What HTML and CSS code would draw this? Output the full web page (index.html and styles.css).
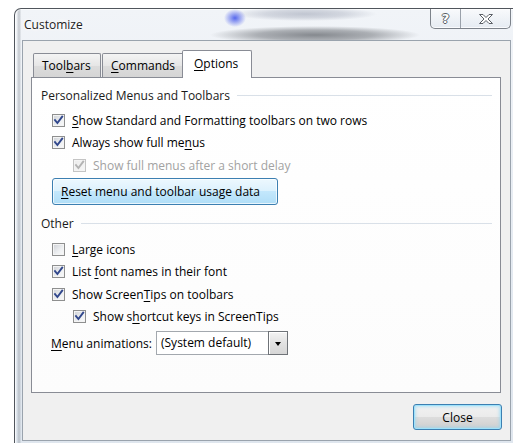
FILE: index.html
```html
<!DOCTYPE html>
<html lang="en">
<head>
<meta charset="utf-8">
<title>Customize</title>
<link rel="stylesheet" href="styles.css">
</head>
<body>
<div class="window">
  <div class="titlebar">
    <span class="title">Customize</span>
    <div class="caption-buttons">
      <span class="cap-btn cap-help">?</span>
      <span class="cap-btn cap-close">
        <svg width="16" height="12" viewBox="0 0 16 12"><path d="M1.5 1.5h3.5l3 3 3-3h3.5l-4.5 4.5 4.5 4.5h-3.5l-3-3-3 3h-3.5l4.5-4.5z" fill="#fff" stroke="#5a5f66" stroke-width="1" stroke-linejoin="round"/></svg>
      </span>
    </div>
  </div>
  <div class="frame-body">
    <div class="client">
      <div class="tabs">
        <div class="tab tab-toolbars">Tool<u>b</u>ars</div>
        <div class="tab tab-commands"><u>C</u>ommands</div>
        <div class="tab tab-options active"><u>O</u>ptions</div>
      </div>
      <div class="panel">
        <div class="group-head"><span>Personalized Menus and Toolbars</span><i class="rule"></i></div>
        <div class="check checked"><span class="box"><svg viewBox="0 0 11 11"><path d="M2 5.2l2.4 2.8 4.8-6.3"/></svg></span><span><u>S</u>how Standard and Formatting toolbars on two rows</span></div>
        <div class="check checked"><span class="box"><svg viewBox="0 0 11 11"><path d="M2 5.2l2.4 2.8 4.8-6.3"/></svg></span><span>Always show full me<u>n</u>us</span></div>
        <div class="check checked disabled indent"><span class="box"><svg viewBox="0 0 11 11"><path d="M2 5.2l2.4 2.8 4.8-6.3"/></svg></span><span>Show full menus after a short delay</span></div>
        <button class="btn-reset"><u>R</u>eset menu and toolbar usage data</button>
        <div class="group-head other"><span>Other</span><i class="rule"></i></div>
        <div class="check"><span class="box"></span><span><u>L</u>arge icons</span></div>
        <div class="check checked"><span class="box"><svg viewBox="0 0 11 11"><path d="M2 5.2l2.4 2.8 4.8-6.3"/></svg></span><span>List <u>f</u>ont names in their font</span></div>
        <div class="check checked"><span class="box"><svg viewBox="0 0 11 11"><path d="M2 5.2l2.4 2.8 4.8-6.3"/></svg></span><span>Show Screen<u>T</u>ips on toolbars</span></div>
        <div class="check checked indent"><span class="box"><svg viewBox="0 0 11 11"><path d="M2 5.2l2.4 2.8 4.8-6.3"/></svg></span><span>Show s<u>h</u>ortcut keys in ScreenTips</span></div>
        <div class="combo-row">
          <span class="combo-label"><u>M</u>enu animations:</span>
          <div class="combo">
            <span class="combo-value">(System default)</span>
            <span class="combo-arrow"><i class="tri"></i></span>
          </div>
        </div>
      </div>
      <div class="footer">
        <button class="btn-close">Close</button>
      </div>
    </div>
  </div>
</div>
</body>
</html>
```

FILE: styles.css
```css
* {
  box-sizing: border-box;
}

html,
body {
  margin: 0;
  padding: 0;
}

body {
  width: 513px;
  height: 443px;
  overflow: hidden;
  background: #fff;
  font-family: "Open Sans", "Noto Sans", sans-serif;
  font-size: 12px;
  color: #000;
}

u {
  text-decoration: underline;
  text-underline-offset: 2px;
}

/* Aero glass window frame */
.window {
  margin: 8px 0 0 14px;
  width: 505px;
  border: 1px solid #50555c;
  border-bottom: none;
  border-radius: 7px 7px 0 0;
  box-shadow: inset 0 0 0 1px rgba(255, 255, 255, 0.7);
  background:
    linear-gradient(to right, transparent 2px, rgba(110, 118, 128, 0.28) 3px, rgba(110, 118, 128, 0.28) 5px, transparent 6px),
    linear-gradient(to bottom, #f1f4f8, #e4eaf1 60%, #dfe6ee);
}

/* title bar, with the blurred desktop showing through the glass */
.titlebar {
  height: 31px;
  display: flex;
  align-items: center;
  padding-left: 9px;
  background:
    radial-gradient(ellipse 11px 9px at 220px 9px, rgba(60, 80, 235, 0.85), rgba(60, 80, 235, 0) 100%),
    radial-gradient(ellipse 72px 7px at 290px 5px, rgba(120, 128, 150, 0.4) 0%, rgba(120, 128, 150, 0.25) 55%, rgba(120, 128, 150, 0) 100%),
    radial-gradient(ellipse 105px 9px at 300px 26px, rgba(88, 92, 98, 0.7) 0%, rgba(88, 92, 98, 0.45) 55%, rgba(88, 92, 98, 0) 100%);
}

.title {
  font-size: 12px;
  color: #222;
  text-shadow: 0 0 6px #fff, 0 0 10px #fff, 0 0 3px #fff;
}

.caption-buttons {
  margin-left: auto;
  margin-right: 7px;
  align-self: flex-start;
  display: flex;
  height: 20px;
  border: 1px solid #7d838b;
  border-top: none;
  border-radius: 0 0 5px 5px;
  background: linear-gradient(to bottom, rgba(255, 255, 255, 0.55), rgba(225, 232, 240, 0.7));
  box-shadow: inset 0 -1px 0 rgba(255, 255, 255, 0.8);
}

.cap-btn {
  display: flex;
  align-items: center;
  justify-content: center;
  height: 100%;
}

.cap-help {
  width: 30px;
  border-right: 1px solid #9aa1aa;
  font-family: "DejaVu Sans", sans-serif;
  font-weight: bold;
  font-size: 13px;
  color: #fff;
  text-shadow: 1px 0 0 #5a5f66, -1px 0 0 #5a5f66, 0 1px 0 #5a5f66, 0 -1px 0 #5a5f66;
}

.cap-close {
  width: 49px;
}

.cap-close svg {
  display: block;
}

/* dialog client area */
.frame-body {
  padding: 0 7px 7px 7px;
}

.client {
  height: 401px;
  background: #f0f0f0;
  border: 1px solid #9aa3ad;
  padding: 9px 9px 0 8px;
}

/* tab strip */
.tabs {
  display: flex;
  align-items: flex-end;
  height: 27px;
  margin-left: 2px;
}

.tab {
  height: 24px;
  border: 1px solid #898c95;
  border-bottom: none;
  border-radius: 2px 2px 0 0;
  background: linear-gradient(to bottom, #f4f4f4, #e6e6e6 50%, #dcdcdc 51%, #d5d5d5);
  padding-left: 8px;
  line-height: 23px;
  color: #000;
}

.tab-toolbars {
  width: 68px;
}

.tab-commands {
  width: 82px;
  margin-left: 1px;
}

.tab-options {
  width: 70px;
  margin-left: -2px;
}

.tab.active {
  position: relative;
  z-index: 1;
  height: 28px;
  margin-bottom: -1px;
  background: #fff;
  padding-left: 11px;
  line-height: 25px;
}

/* tab page */
.panel {
  width: 470px;
  height: 316px;
  border: 1px solid #898c95;
  background: linear-gradient(to bottom, #fff, #fcfcfc);
  padding: 7px 8px 0 9px;
}

.group-head {
  display: flex;
  align-items: center;
  height: 20px;
  color: #1a1a1a;
}

.group-head .rule {
  flex: 1;
  height: 1px;
  margin-left: 7px;
  background: #d9e0e8;
}

.group-head.other {
  margin-top: 9px;
}

.check {
  display: flex;
  align-items: center;
  height: 22.6px;
  padding-left: 11px;
}

.panel > .group-head + .check {
  margin-top: 4px;
}

.check.indent {
  padding-left: 32px;
}

.box {
  width: 13px;
  height: 13px;
  flex: none;
  margin-right: 7px;
  border: 1px solid #8e8f8f;
  background: linear-gradient(135deg, #cdd0d5, #eef0f2 60%, #fafafa);
  box-shadow: inset 0 0 0 1px #f4f4f4;
}

.box svg {
  display: block;
  width: 11px;
  height: 11px;
}

.box path {
  fill: none;
  stroke: #31478c;
  stroke-width: 1.9;
  stroke-linecap: square;
}

.check.disabled {
  color: #a2a2a2;
}

.check.disabled .box {
  border-color: #c4c4c4;
  background: linear-gradient(135deg, #ececec, #f7f7f7);
}

.check.disabled .box path {
  stroke: #b3b3b3;
}

.btn-reset {
  display: block;
  width: 226px;
  height: 27px;
  margin: 1px 0 0 11px;
  padding: 0 0 0 8px;
  text-align: left;
  font: inherit;
  color: #000;
  border: 1px solid #3c7fb1;
  border-radius: 3px;
  background: linear-gradient(to bottom, #edf8fe, #dcf1fd 48%, #c3e7fc 50%, #b0def7);
  box-shadow: inset 0 0 0 1px rgba(255, 255, 255, 0.7);
}

/* combo box row */
.combo-row {
  display: flex;
  align-items: center;
  margin-top: 3px;
  padding-left: 10px;
}

.combo-label {
  width: 105px;
}

.combo {
  display: flex;
  height: 24px;
}

.combo-value {
  width: 112px;
  border: 1px solid #a3a8ae;
  border-right: none;
  background: #fff;
  padding-left: 4px;
  line-height: 22px;
}

.combo-arrow {
  width: 20px;
  display: flex;
  align-items: center;
  justify-content: center;
  border: 1px solid #6f7378;
  background: linear-gradient(to bottom, #f3f3f3, #e2e2e2 50%, #d6d6d6);
  box-shadow: inset 1px 1px 0 #fff;
}

.tri {
  width: 0;
  height: 0;
  border-left: 3.5px solid transparent;
  border-right: 3.5px solid transparent;
  border-top: 4px solid #000;
  margin-top: 1px;
}

/* dialog buttons */
.footer {
  display: flex;
  justify-content: flex-end;
  margin-top: 11px;
  margin-right: -1px;
}

.btn-close {
  width: 89px;
  height: 26px;
  font: inherit;
  color: #000;
  padding: 0;
  border: 1px solid #3c7fb1;
  border-radius: 3px;
  background: linear-gradient(to bottom, #f2f2f2, #ebebeb 48%, #dddddd 50%, #cfcfcf);
  box-shadow: inset 0 0 0 1px #9ee2fb, inset 0 0 3px 2px rgba(140, 215, 245, 0.55);
}
```
